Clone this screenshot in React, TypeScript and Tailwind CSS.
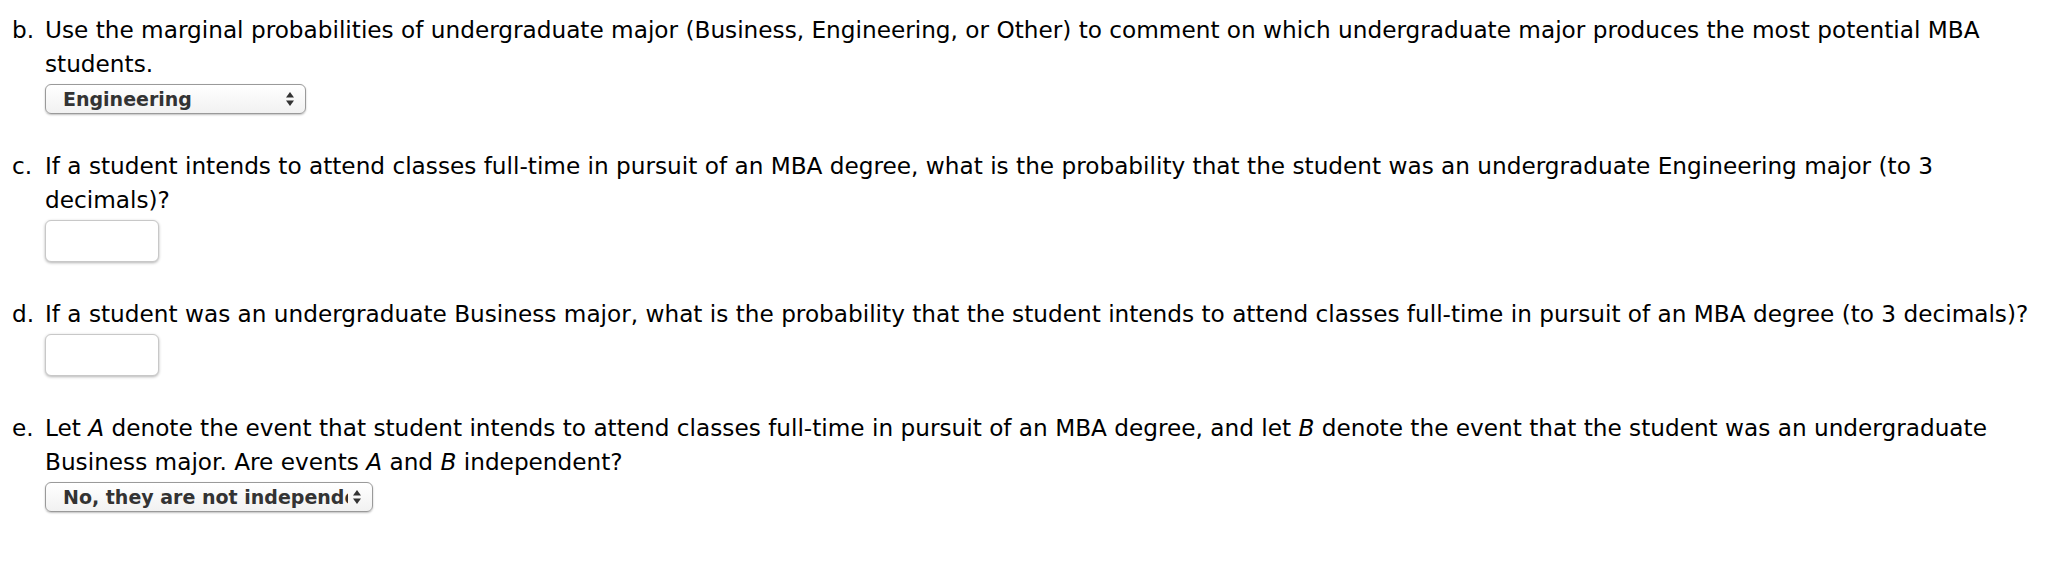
import type { ReactNode } from "react";

// ── 下拉框 (静态) ─────────────────────────────────────
function FakeSelect({ value, width }: { value: string; width: string }) {
  return (
    <div
      className={`${width} h-[30px] mt-[3px] flex items-center rounded-[6px] border border-[#9a9a9a] bg-gradient-to-b from-white to-[#f1f1f1] shadow-[0_1px_2px_rgba(0,0,0,0.25)] overflow-hidden`}
    >
      <span className="flex-1 pl-[17px] overflow-hidden whitespace-nowrap text-[19px] font-bold text-[#333] leading-[28px]">
        {value}
      </span>
      <svg width="10" height="16" viewBox="0 0 10 16" className="mr-[10px] ml-[4px] shrink-0">
        <path d="M5 1 L9 6.5 L1 6.5 Z" fill="#333" />
        <path d="M5 15 L9 9.5 L1 9.5 Z" fill="#333" />
      </svg>
    </div>
  );
}

// ── 输入框 ────────────────────────────────────────────
function AnswerBox() {
  return (
    <input
      type="text"
      className="block w-[114px] h-[42px] mt-[3px] rounded-[6px] border border-[#c8c8c8] bg-white shadow-[0_1px_3px_rgba(0,0,0,0.3)] outline-none"
    />
  );
}

function Item({ label, children, control }: { label: string; children: ReactNode; control: ReactNode }) {
  return (
    <div className="flex">
      <div className="w-[45px] shrink-0 pl-[12px]">{label}</div>
      <div className="flex-1">
        <p>{children}</p>
        {control}
      </div>
    </div>
  );
}

export default function App() {
  return (
    <main
      className="min-h-screen bg-white text-black pt-[13px] pr-[8px] text-[23.2px] leading-[34px] flex flex-col gap-[35px]"
      style={{ fontFamily: '"DejaVu Sans", Verdana, sans-serif' }}
    >
      <Item label="b." control={<FakeSelect value="Engineering" width="w-[261px]" />}>
        Use the marginal probabilities of undergraduate major (Business, Engineering, or Other) to comment on which
        undergraduate major produces the most potential MBA students.
      </Item>

      <Item label="c." control={<AnswerBox />}>
        If a student intends to attend classes full-time in pursuit of an MBA degree, what is the probability that the
        student was an undergraduate Engineering major (to 3 decimals)?
      </Item>

      <Item label="d." control={<AnswerBox />}>
        If a student was an undergraduate Business major, what is the probability that the student intends to attend
        classes full-time in pursuit of an MBA degree (to 3 decimals)?
      </Item>

      <Item label="e." control={<FakeSelect value="No, they are not independent" width="w-[328px]" />}>
        Let <i>A</i> denote the event that student intends to attend classes full-time in pursuit of an MBA degree, and
        let <i>B</i> denote the event that the student was an undergraduate Business major. Are events <i>A</i> and{" "}
        <i>B</i> independent?
      </Item>
    </main>
  );
}
